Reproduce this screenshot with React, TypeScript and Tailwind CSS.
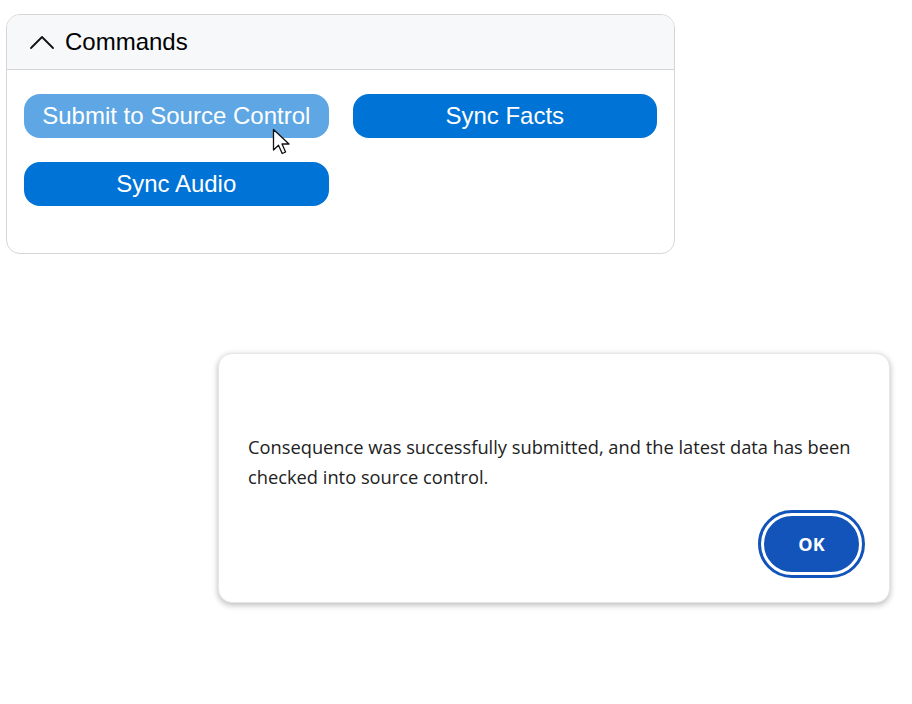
import { useState } from 'react'

function ChevronUp() {
  return (
    <svg width="26" height="16" viewBox="0 0 26 16" fill="none" stroke="#111" strokeWidth="1.8" strokeLinecap="round" strokeLinejoin="round">
      <path d="M2 14L13 3L24 14" />
    </svg>
  )
}

function Cursor() {
  return (
    <svg className="pointer-events-none absolute left-[248px] top-[34px]" width="22" height="28" viewBox="0 0 22 28">
      <path d="M1.5 1.5V22L6.5 17.2L10.2 25.5L13.6 24L10 16H17Z" fill="#fff" stroke="#111" strokeWidth="1.3" strokeLinejoin="round" />
    </svg>
  )
}

function CommandButton({ label, faded, children }: { label: string; faded?: boolean; children?: React.ReactNode }) {
  return (
    <button
      className={
        faded
          ? 'relative h-[44px] rounded-[16px] bg-[#5ea7e4] text-[24px] leading-none text-white'
          : 'relative h-[44px] rounded-[16px] bg-[#0073d6] text-[24px] leading-none text-white'
      }
    >
      {label}
      {children}
    </button>
  )
}

export default function App() {
  const [open] = useState(true)

  return (
    <div className="min-h-[704px] w-[912px] bg-white pl-[6px] pt-[14px] font-['Liberation_Sans',Arial,sans-serif]">
      <section className="w-[669px] overflow-hidden rounded-[14px] border border-[#d6d6d6]">
        <header className="flex h-[55px] items-center gap-[10px] border-b border-[#d6d6d6] bg-[#f7f8fa] pl-[22px]">
          <ChevronUp />
          <span className="text-[24px] text-black">Commands</span>
        </header>
        {open && (
          <div className="grid grid-cols-2 gap-6 px-[17px] pb-[47px] pt-[24px]">
            <CommandButton label="Submit to Source Control" faded>
              <Cursor />
            </CommandButton>
            <CommandButton label="Sync Facts" />
            <CommandButton label="Sync Audio" />
          </div>
        )}
      </section>

      <div className="ml-[212px] mt-[99px] flex h-[250px] w-[672px] flex-col rounded-[14px] border border-[#e6e6e6] bg-white shadow-[0_2px_6px_rgba(0,0,0,0.28)]">
        <p className="px-[29px] pt-[78px] font-['Open_Sans','Noto_Sans',sans-serif] text-[18.3px] leading-[30px] text-[#222]">
          Consequence was successfully submitted, and the latest data has been checked into source control.
        </p>
        <div className="mt-auto flex justify-end pb-[27px] pr-[27px]">
          <button className="h-[62px] w-[101px] rounded-full border-[3px] border-white bg-[#1254b9] font-['Open_Sans','Noto_Sans',sans-serif] text-[18px] font-bold text-white outline outline-[3px] outline-[#1254b9]">
            OK
          </button>
        </div>
      </div>
    </div>
  )
}
